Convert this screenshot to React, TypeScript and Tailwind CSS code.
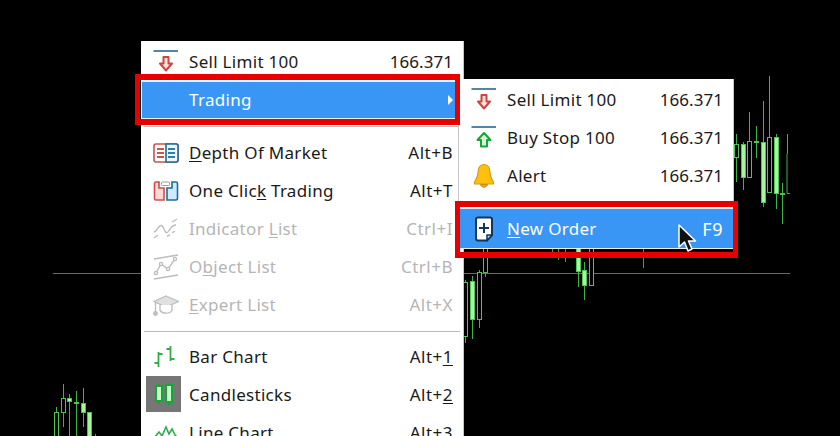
import React from "react";

type Candle = {
  x: number;
  top: number;
  bottom: number;
  y1: number;
  y2: number;
  filled?: boolean;
};

const candles: Candle[] = [
  // right cluster
  { x: 736, y1: 144, y2: 157, top: 134, bottom: 182 },
  { x: 743, y1: 144, y2: 177, top: 142, bottom: 190, filled: true },
  { x: 749, y1: 141, y2: 177, top: 112, bottom: 177 },
  { x: 756, y1: 141, y2: 142, top: 126, bottom: 158, filled: true },
  { x: 763, y1: 142, y2: 202, top: 101, bottom: 207, filled: true },
  { x: 769, y1: 137, y2: 192, top: 76, bottom: 192 },
  { x: 776, y1: 137, y2: 193, top: 134, bottom: 209, filled: true },
  { x: 782, y1: 193, y2: 194, top: 183, bottom: 224, filled: true },
  // under the submenu
  { x: 465, y1: 282, y2: 336, top: 280, bottom: 343 },
  { x: 472, y1: 281, y2: 319, top: 276, bottom: 339, filled: true },
  { x: 479, y1: 272, y2: 319, top: 270, bottom: 328 },
  { x: 485, y1: 240, y2: 272, top: 240, bottom: 277 },
  { x: 578, y1: 240, y2: 271, top: 240, bottom: 287, filled: true },
  { x: 584, y1: 270, y2: 285, top: 262, bottom: 300, filled: true },
  { x: 591, y1: 240, y2: 285, top: 240, bottom: 285 },
  // bottom left
  { x: 56, y1: 412, y2: 440, top: 407, bottom: 440 },
  { x: 63, y1: 398, y2: 412, top: 384, bottom: 427 },
  { x: 69, y1: 398, y2: 401, top: 394, bottom: 440, filled: true },
  { x: 76, y1: 402, y2: 403, top: 391, bottom: 440, filled: true },
  { x: 83, y1: 403, y2: 412, top: 388, bottom: 427, filled: true },
  { x: 89, y1: 412, y2: 440, top: 412, bottom: 440, filled: true },
];

const wicks = [
  [552, 245, 253],
  [558, 245, 260],
  [565, 245, 262],
  [643, 245, 268],
  [95, 434, 436],
];

const Chart = () => (
  <svg width="840" height="436" className="block">
    <line x1="53" y1="273.5" x2="790" y2="273.5" stroke="#6b6b6b" />
    {wicks.map(([x, a, b], i) => (
      <line key={i} x1={x + 0.5} y1={a} x2={x + 0.5} y2={b} stroke="#38a83f" />
    ))}
    {candles.map((c, i) => (
      <g key={i}>
        <line x1={c.x + 0.5} y1={c.top} x2={c.x + 0.5} y2={c.bottom} stroke="#3fb346" />
        <rect
          x={c.x - 1.5}
          y={c.y1 + 0.5}
          width="4"
          height={c.y2 - c.y1}
          fill={c.filled ? "#a4f89c" : "#000"}
          stroke="#4cc552"
        />
      </g>
    ))}
    <path d="M787.500 134V153.500H787V193.500H790" fill="none" stroke="#3fb346" />
  </svg>
);

const ArrowIcon = ({ up = false }: { up?: boolean }) => (
  <svg width="26" height="26" viewBox="0 0 26 26" fill="none">
    <line x1="0.500" y1="2" x2="25" y2="2" stroke="#1d5c88" strokeWidth="1.500" />
    {up ? (
      <path
        d="M13 8L19.500 15H16V21.500H10V15H6.500Z"
        fill="#d3f5d9"
        stroke="#16a636"
        strokeWidth="2"
        strokeLinejoin="round"
      />
    ) : (
      <path
        d="M10.500 8H15.500V14.500H19L13 21.500L7 14.500H10.500Z"
        fill="#fbe0dd"
        stroke="#c9473f"
        strokeWidth="2"
        strokeLinejoin="round"
      />
    )}
  </svg>
);

const BellIcon = () => (
  <svg width="22" height="26" viewBox="0 0 22 26">
    <path
      d="M11 1.500C6.500 1.500 5 5.500 5 9.500C5 14.500 3 16.500 1.500 19V21H20.500V19C19 16.500 17 14.500 17 9.500C17 5.500 15.500 1.500 11 1.500Z"
      fill="#fdc00f"
      stroke="#d69a14"
      strokeWidth="1.200"
    />
    <path d="M7.500 21.500C8 25 14 25 14.500 21.500Z" fill="#e8a916" stroke="#c98c10" strokeWidth="1" />
  </svg>
);

const DepthIcon = () => (
  <svg width="26" height="20" viewBox="0 0 26 20" fill="none">
    <rect x="1" y="1" width="24" height="18" rx="2" fill="#fff" stroke="#c7544e" strokeWidth="1.600" />
    <path d="M13 1H23C24 1 25 2 25 3V17C25 18 24 19 23 19H13Z" fill="#eef6fb" stroke="#1d6c99" strokeWidth="1.600" />
    <path d="M4 6H11M4 10H11M4 14H11" stroke="#d4524b" strokeWidth="2" />
    <path d="M15 6H22M15 10H22M15 14H22" stroke="#2f7fae" strokeWidth="2" />
  </svg>
);

const OneClickIcon = () => (
  <svg width="26" height="20" viewBox="0 0 26 20" fill="none">
    <path d="M1.500 2.500C1.500 1.700 2 1 3 1H6V7H11V19H3C2 19 1.500 18.300 1.500 17.500Z" fill="#fdd8d4" stroke="#c9504a" strokeWidth="1.600" />
    <path d="M24.500 2.500C24.500 1.700 24 1 23 1H19V7H14V19H23C24 19 24.500 18.300 24.500 17.500Z" fill="#cfeafb" stroke="#1d6c99" strokeWidth="1.600" />
    <rect x="8.500" y="1" width="8" height="3.500" rx="1" fill="#fff" stroke="#9a9a9a" strokeWidth="1" />
  </svg>
);

const IndicatorIcon = () => (
  <svg width="26" height="22" viewBox="0 0 26 22" fill="none" stroke="#bdbdbd" strokeWidth="1.400">
    <path d="M1 20L5 17" />
    <path d="M3 13C7 6 9 6 11 11C13 16 14 16 17 11C19 8 21 7 23 7" />
    <path d="M14 18L17 17M19 15L22 13M19 4L24 1" />
    <path d="M1 14L3 13" />
  </svg>
);

const ObjectIcon = () => (
  <svg width="26" height="26" viewBox="0 0 26 26" fill="none" stroke="#bdbdbd" strokeWidth="1.400">
    <path d="M1 5L25 1M1 25L25 21" />
    <path d="M3 19L8 10L15 15L22 5" />
    <circle cx="3" cy="19" r="1.600" fill="#fff" />
    <circle cx="8" cy="10" r="1.600" fill="#fff" />
    <circle cx="15" cy="15" r="1.600" fill="#fff" />
    <circle cx="22" cy="5" r="1.600" fill="#fff" />
  </svg>
);

const ExpertIcon = () => (
  <svg width="26" height="21" viewBox="0 0 26 21" fill="none" stroke="#bdbdbd" strokeWidth="1.300">
    <path d="M13 1L25.500 6.500L13 12L1 6.500Z" fill="#e0e0e0" />
    <path d="M7 10V15.500C9.500 19 17 19 19 15.500V10" fill="#fff" />
    <path d="M2.500 7V17" />
    <circle cx="2.500" cy="18.500" r="1.800" fill="#bdbdbd" />
  </svg>
);

const BarIcon = () => (
  <svg width="24" height="24" viewBox="0 0 24 24" fill="none" stroke="#2fae48" strokeWidth="1.800">
    <path d="M4.500 7V22M4.500 9H8.500M4.500 18H0.500" />
    <path d="M16.500 1V16M16.500 4H12.500M16.500 14H20.500" />
  </svg>
);

const CandleIcon = () => (
  <span className="mb-[2px] mr-[4px] flex h-[36px] w-[35px] items-center justify-center bg-[#767676]">
    <svg width="20" height="24" viewBox="0 0 20 24" fill="#cdf7cd" stroke="#14a835" strokeWidth="2">
      <rect x="2" y="4" width="6" height="15" />
      <rect x="12" y="3" width="6" height="17" />
      <path d="M5 4V2M5 19V22M15 3V1M15 20V23" />
    </svg>
  </span>
);

const LineIcon = () => (
  <svg width="26" height="18" viewBox="0 0 26 18" fill="none" stroke="#2fae48" strokeWidth="1.600">
    <path d="M1 14L6 8L9 12L13 3L16 10L19 5L22 11L25 14" />
  </svg>
);

const NewOrderIcon = () => (
  <svg width="18" height="26" viewBox="0 0 18 26">
    <path
      d="M3 1.500H15C16 1.500 17 2.500 17 3.500V19L12 24.500H3C2 24.500 1 23.500 1 22.500V3.500C1 2.500 2 1.500 3 1.500Z"
      fill="#fff"
      stroke="#10365e"
      strokeWidth="2"
    />
    <path d="M12 24.500V19H17Z" fill="#bcd8f2" stroke="#10365e" strokeWidth="1.500" />
    <path d="M9 7V17M4 12H14" stroke="#10365e" strokeWidth="2" />
  </svg>
);

const MenuRow = ({
  icon,
  label,
  shortcut,
  disabled = false,
  active = false,
}: {
  icon?: React.ReactNode;
  label: React.ReactNode;
  shortcut?: React.ReactNode;
  disabled?: boolean;
  active?: boolean;
}) => (
  <div
    className={`flex h-[38px] shrink-0 items-center pr-[10px] text-[17px] tracking-[0.3px] ${
      disabled ? "text-[#b5b5b5]" : active ? "text-white" : "text-[#1a1a1a]"
    }`}
  >
    <span className="flex w-[48px] shrink-0 items-center justify-center pl-[1px]">{icon}</span>
    <span className="flex-1 whitespace-nowrap">{label}</span>
    {shortcut && <span className="whitespace-nowrap tracking-[0.5px]">{shortcut}</span>}
  </div>
);

const Price = () => <span className="tracking-[0.05px]">166.371</span>;

const Separator = ({ className = "h-[15px]" }: { className?: string }) => (
  <div className={`flex shrink-0 items-center px-[3px] ${className}`}>
    <div className="h-px w-full bg-[#bcbcbc]" />
  </div>
);

const Key = ({ children }: { children: React.ReactNode }) => (
  <span className="underline underline-offset-2">{children}</span>
);

export default function App() {
  return (
    <div className="relative h-[436px] w-[840px] overflow-hidden bg-black font-['Noto_Sans','Liberation_Sans',sans-serif]">
      <Chart />

      {/* main context menu */}
      <div className="absolute left-[141px] top-[41px] flex h-[420px] w-[322px] flex-col bg-white pt-[2px] shadow-[1px_0_0_#c8c8c8]">
        <MenuRow icon={<ArrowIcon />} label="Sell Limit 100" shortcut={<Price />} />
        <div className="h-[38px] shrink-0 border border-[#e8f0fa] bg-[#3a96f5]">
          <div className="relative -ml-px -mt-px">
            <MenuRow active label="Trading" />
            <span className="absolute right-[9px] top-[14px] h-0 w-0 border-y-[5px] border-l-[5px] border-y-transparent border-l-white" />
          </div>
        </div>
        <Separator />
        <MenuRow icon={<DepthIcon />} label={<><Key>D</Key>epth Of Market</>} shortcut="Alt+B" />
        <MenuRow icon={<OneClickIcon />} label={<>One Clic<Key>k</Key> Trading</>} shortcut="Alt+T" />
        <MenuRow disabled icon={<IndicatorIcon />} label={<>Indicator <Key>L</Key>ist</>} shortcut="Ctrl+I" />
        <MenuRow disabled icon={<ObjectIcon />} label={<>O<Key>b</Key>ject List</>} shortcut="Ctrl+B" />
        <MenuRow disabled icon={<ExpertIcon />} label={<><Key>E</Key>xpert List</>} shortcut="Alt+X" />
        <Separator className="h-[14px]" />
        <MenuRow icon={<BarIcon />} label="Bar Chart" shortcut={<>Alt+<Key>1</Key></>} />
        <MenuRow icon={<CandleIcon />} label="Candlesticks" shortcut={<>Alt+<Key>2</Key></>} />
        <MenuRow icon={<LineIcon />} label="Line Chart" shortcut={<>Alt+<Key>3</Key></>} />
      </div>

      {/* trading submenu */}
      <div className="absolute left-[458px] top-[79px] flex h-[170px] w-[276px] flex-col border-x border-[#c8c8c8] bg-white pt-[2px]">
        <MenuRow icon={<ArrowIcon />} label="Sell Limit 100" shortcut={<Price />} />
        <MenuRow icon={<ArrowIcon up />} label="Buy Stop 100" shortcut={<Price />} />
        <MenuRow icon={<BellIcon />} label="Alert" shortcut={<Price />} />
        <div className="h-[15px] shrink-0" />
        <div className="-mr-px -mt-[2px] h-[41px] shrink-0 border border-[#e8f0fa] bg-[#3a96f5] pt-px">
          <div className="-ml-px">
            <MenuRow
              active
              icon={<NewOrderIcon />}
              label={<><Key>N</Key>ew Order</>}
              shortcut={<span className="text-[18px]">F9</span>}
            />
          </div>
        </div>
      </div>

      {/* callout boxes */}
      <div className="absolute left-[135px] top-[74px] h-[51px] w-[325px] border-x-[5px] border-y-[6px] border-[#e60000]" />
      <div className="absolute left-[455px] top-[201px] h-[57px] w-[283px] border-x-[5px] border-y-[6px] border-[#e60000]" />

      {/* mouse pointer */}
      <svg className="absolute left-[677px] top-[224px]" width="20" height="30" viewBox="0 0 20 30">
        <path d="M2 1V23L7.500 18L11 27L15 25L11.500 17H18.500Z" fill="#111" stroke="#fff" strokeWidth="1.500" strokeLinejoin="round" />
      </svg>
    </div>
  );
}
